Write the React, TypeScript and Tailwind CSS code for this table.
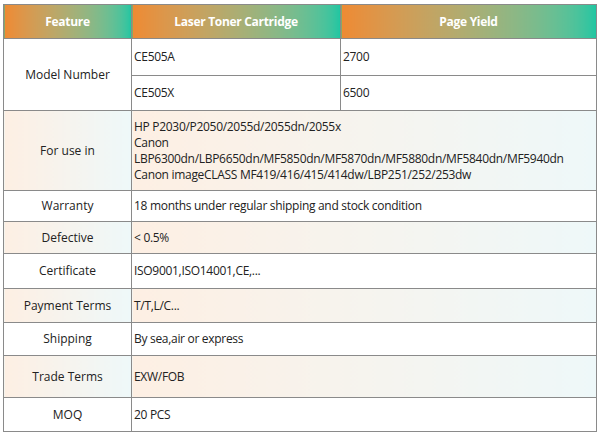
const rows: { label: string; values: string[][]; h: number; tint?: boolean }[] = [
  { label: 'For use in', h: 80, tint: true, values: [['HP P2030/P2050/2055d/2055dn/2055x', 'Canon', 'LBP6300dn/LBP6650dn/MF5850dn/MF5870dn/MF5880dn/MF5840dn/MF5940dn', 'Canon imageCLASS MF419/416/415/414dw/LBP251/252/253dw']] },
  { label: 'Warranty', h: 31, values: [['18 months under regular shipping and stock condition']] },
  { label: 'Defective', h: 32, tint: true, values: [['< 0.5%']] },
  { label: 'Certificate', h: 35, values: [['ISO9001,ISO14001,CE,...']] },
  { label: 'Payment Terms', h: 34, tint: true, values: [['T/T,L/C...']] },
  { label: 'Shipping', h: 33, values: [['By sea,air or express']] },
  { label: 'Trade Terms', h: 42, tint: true, values: [['EXW/FOB']] },
  { label: 'MOQ', h: 34, values: [['20 PCS']] },
]

const head = 'bg-gradient-to-r from-[#ee8a32] to-[#1cc6a2] text-white font-bold text-[12px] tracking-[-0.3px] text-center border border-[#8a8a8a]'
const cell = 'border border-[#8a8a8a] px-[2px] text-left align-middle tracking-[-0.3px]'
const tint = 'bg-gradient-to-r from-[#fdefe3] to-[#eef8f9]'

export default function App() {
  return (
    <div className="w-[600px] h-[435px] bg-white pt-[4px] pl-[3px]" style={{ fontFamily: '"Open Sans", "Noto Sans", sans-serif' }}>
      <table className="border-collapse table-fixed w-[593px] text-[12px] leading-[16px] text-[#222]">
        <colgroup>
          <col className="w-[128px]" />
          <col className="w-[209px]" />
          <col className="w-[256px]" />
        </colgroup>
        <thead>
          <tr className="h-[34px]">
            <th className={head}>Feature</th>
            <th className={head}>Laser Toner Cartridge</th>
            <th className={head}>Page Yield</th>
          </tr>
        </thead>
        <tbody>
          <tr className="h-[37px]">
            <td rowSpan={2} className="border border-[#8a8a8a] text-center">Model Number</td>
            <td className={cell}>CE505A</td>
            <td className={cell}>2700</td>
          </tr>
          <tr className="h-[35px]">
            <td className={cell}>CE505X</td>
            <td className={cell}>6500</td>
          </tr>
          {rows.map(r => (
            <tr key={r.label} style={{ height: r.h }}>
              <td className={`border border-[#8a8a8a] text-center ${r.tint ? tint : ''}`}>{r.label}</td>
              <td colSpan={2} className={`${cell} ${r.tint ? tint : ''}`}>
                {r.values[0].map(line => (
                  <div key={line}>{line}</div>
                ))}
              </td>
            </tr>
          ))}
        </tbody>
      </table>
    </div>
  )
}
